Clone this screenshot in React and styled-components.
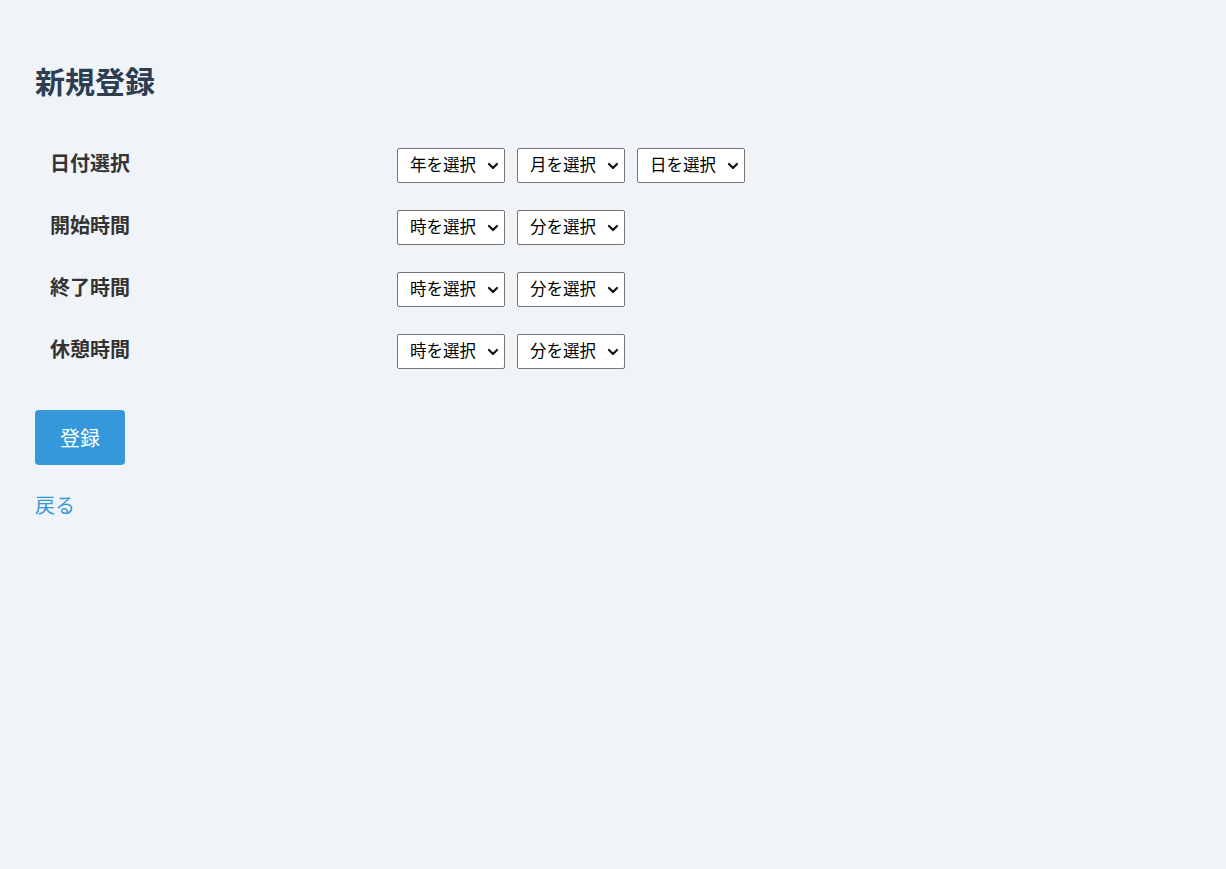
import React, { useState } from 'react';
import styled, { createGlobalStyle } from 'styled-components';

const GlobalStyle = createGlobalStyle`
    body {
        margin: 0;
        background-color: #f0f3f8;
        font-family: "Noto Sans CJK JP", "Noto Sans", sans-serif;
        color: #2c3e50;
    }
`;

const Page = styled.div`
    padding: 0 35px 40px;
`;

const Title = styled.h2`
    margin: 0;
    padding-top: 60px;
    font-size: 30px;
    line-height: 40px;
    font-weight: 700;
    color: #2c3e50;
`;

const Form = styled.form`
    display: flex;
    flex-direction: column;
    align-items: flex-start;
`;

const Grid = styled.div`
    display: grid;
    grid-template-columns: 362px auto;
    row-gap: 27px;
    margin-top: 48px;
`;

const Label = styled.div`
    padding-left: 15px;
    font-size: 20px;
    font-weight: 700;
    color: #333;
    line-height: 35px;
    transform: translateY(-3px);
`;

const Selects = styled.div`
    display: flex;
    gap: 12px;
`;

const SelectBox = styled.div`
    position: relative;
    display: inline-flex;
`;

const Select = styled.select`
    appearance: none;
    -webkit-appearance: none;
    height: 35px;
    padding: 0 28px 3px 12px;
    font-family: "Noto Sans CJK JP", sans-serif;
    font-size: 16.5px;
    color: #000;
    background: #fff;
    border: 1px solid #767676;
    border-radius: 2px;
`;

const Chevron = styled.svg`
    position: absolute;
    right: 6px;
    top: 50%;
    width: 12px;
    height: 12px;
    margin-top: -6px;
    pointer-events: none;
`;

const Button = styled.button`
    margin-top: 41px;
    width: 90px;
    height: 55px;
    border: none;
    border-radius: 4px;
    background-color: #3498db;
    color: #fff;
    font-family: "Noto Sans CJK JP", sans-serif;
    font-size: 20px;
    cursor: pointer;
`;

const BackLink = styled.a`
    margin-top: 25px;
    display: inline-block;
    color: #3498db;
    font-size: 20px;
    text-decoration: none;
`;

const range = (from, to) => Array.from({ length: to - from + 1 }, (_, i) => from + i);

const Picker = ({ placeholder, options }) => (
    <SelectBox>
        <Select defaultValue="">
            <option value="">{placeholder}</option>
            {options.map(o => <option key={o} value={o}>{o}</option>)}
        </Select>
        <Chevron viewBox="0 0 12 12">
            <path d="M2 4 L6 8 L10 4" fill="none" stroke="#111" strokeWidth="2.2" strokeLinecap="round" strokeLinejoin="round" />
        </Chevron>
    </SelectBox>
);

const TimeRow = ({ label }) => (
    <>
        <Label>{label}</Label>
        <Selects>
            <Picker placeholder="時を選択" options={range(0, 23)} />
            <Picker placeholder="分を選択" options={range(0, 59)} />
        </Selects>
    </>
);

export default function App() {
    const [sent, setSent] = useState(false);

    return (
        <Page>
            <GlobalStyle />
            <Title>新規登録</Title>
            <Form onSubmit={e => { e.preventDefault(); setSent(!sent); }}>
                <Grid>
                    <Label>日付選択</Label>
                    <Selects>
                        <Picker placeholder="年を選択" options={range(2020, 2030)} />
                        <Picker placeholder="月を選択" options={range(1, 12)} />
                        <Picker placeholder="日を選択" options={range(1, 31)} />
                    </Selects>
                    <TimeRow label="開始時間" />
                    <TimeRow label="終了時間" />
                    <TimeRow label="休憩時間" />
                </Grid>
                <Button type="submit">登録</Button>
                <BackLink href="#">戻る</BackLink>
            </Form>
        </Page>
    );
}
